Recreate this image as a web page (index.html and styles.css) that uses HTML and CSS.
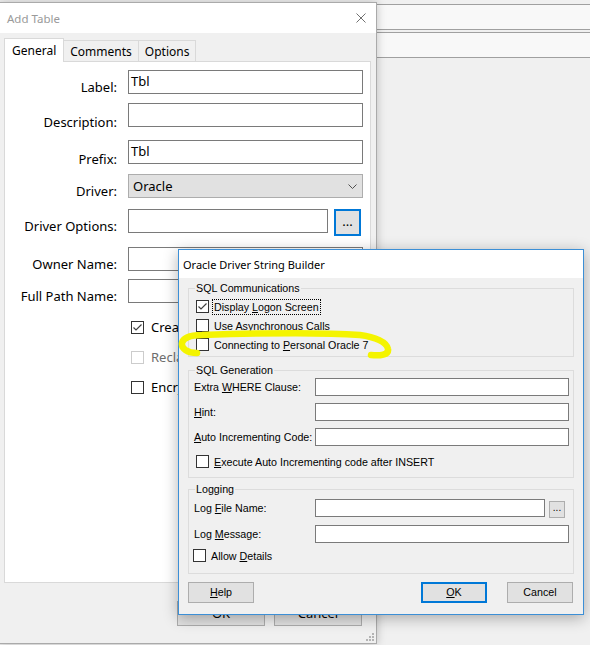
FILE: index.html
```html
<!DOCTYPE html>
<html lang="en">
<head>
<meta charset="utf-8">
<title>Add Table</title>
<link rel="stylesheet" href="styles.css">
</head>
<body>
<div class="desk">
  <div class="desk-bar"></div>
  <div class="desk-bar"></div>
</div>

<section class="window add-table">
  <header class="titlebar">
    <span class="title">Add Table</span>
    <svg class="close" width="10" height="10" viewBox="0 0 10 10"><path d="M0.5 0.5L9.5 9.5M9.5 0.5L0.5 9.5"/></svg>
  </header>
  <div class="at-body">
    <nav class="tabs">
      <span class="tab active">General</span>
      <span class="tab">Comments</span>
      <span class="tab">Options</span>
    </nav>
    <div class="panel">
      <div class="form">
        <span class="lbl">Label:</span><div class="edit">Tbl</div>
        <span class="lbl low">Description:</span><div class="edit"></div>
        <span class="lbl low">Prefix:</span><div class="edit">Tbl</div>
        <span class="lbl">Driver:</span>
        <div class="combo"><span>Oracle</span><svg width="9" height="5" viewBox="0 0 9 5"><path d="M0.5 0.5L4.5 4.5L8.5 0.5"/></svg></div>
        <span class="lbl">Driver Options:</span>
        <div class="field-row"><div class="edit"></div><span class="btn-ellipsis">...</span></div>
        <span class="lbl">Owner Name:</span><div class="edit"></div>
        <span class="lbl">Full Path Name:</span><div class="edit"></div>
      </div>
      <div class="checks">
        <div class="chk"><span class="box"><svg width="11" height="11" viewBox="0 0 11 11"><path d="M1.5 5.5L4 8L9.5 2.5"/></svg></span><span>Create</span></div>
        <div class="chk disabled"><span class="box"></span><span>Reclaim</span></div>
        <div class="chk"><span class="box"></span><span>Encrypt</span></div>
      </div>
    </div>
    <div class="footer">
      <span class="btn">OK</span>
      <span class="btn">Cancel</span>
    </div>
  </div>
  <svg class="grip" width="10" height="10" viewBox="0 0 10 10">
    <rect x="7" y="1" width="2" height="2"/>
    <rect x="4" y="4" width="2" height="2"/><rect x="7" y="4" width="2" height="2"/>
    <rect x="1" y="7" width="2" height="2"/><rect x="4" y="7" width="2" height="2"/><rect x="7" y="7" width="2" height="2"/>
  </svg>
</section>

<section class="window oracle">
  <header class="titlebar">
    <span class="title">Oracle Driver String Builder</span>
  </header>
  <div class="ob-body">
    <fieldset class="group comms">
      <legend>SQL Communications</legend>
      <div class="ck"><span class="box"><svg width="11" height="11" viewBox="0 0 11 11"><path d="M1.5 5.5L4 8L9.5 2.5"/></svg></span><span class="ck-text focus">Display <u>L</u>ogon Screen</span></div>
      <div class="ck"><span class="box"></span><span class="ck-text">Use <u>A</u>synchronous Calls</span></div>
      <div class="ck"><span class="box"></span><span class="ck-text">Connecting to <u>P</u>ersonal Oracle 7</span></div>
    </fieldset>
    <fieldset class="group gen">
      <legend>SQL Generation</legend>
      <div class="rows">
        <span>Extra <u>W</u>HERE Clause:</span><div class="edit"></div>
        <span><u>H</u>int:</span><div class="edit"></div>
        <span><u>A</u>uto Incrementing Code:</span><div class="edit"></div>
      </div>
      <div class="ck"><span class="box"></span><span class="ck-text"><u>E</u>xecute Auto Incrementing code after INSERT</span></div>
    </fieldset>
    <fieldset class="group logging">
      <legend>Logging</legend>
      <div class="rows">
        <span>Log <u>F</u>ile Name:</span>
        <div class="pick"><div class="edit"></div><span class="mini-btn">...</span></div>
        <span>Log <u>M</u>essage:</span><div class="edit"></div>
      </div>
      <div class="ck"><span class="box"></span><span class="ck-text">Allow <u>D</u>etails</span></div>
    </fieldset>
    <div class="ob-buttons">
      <span class="pbtn"><u>H</u>elp</span>
      <span class="pbtn default"><u>O</u>K</span>
      <span class="pbtn">Cancel</span>
    </div>
  </div>
</section>

<svg class="marker" width="230" height="45" viewBox="0 0 230 45">
  <path d="M27,31 C18,31 11,27 12,21 C13,16 20,13 32,13 C90,11 150,10 190,13 C205,15 217,20 218,27 C219,33 210,34 201,33"/>
</svg>
</body>
</html>
```

FILE: styles.css
```css
* { box-sizing: border-box; }

html, body { margin: 0; }

body {
  position: relative;
  width: 590px;
  height: 645px;
  overflow: hidden;
  background: #f0f0f0;
  font-family: "Noto Sans", sans-serif;
  color: #000;
}

/* toolbars of the main window behind the dialogs */
.desk { padding-top: 4px; }
.desk-bar {
  height: 26px;
  background: #f8f8f8;
  border-top: 1px solid #a0a0a0;
  border-bottom: 1px solid #a0a0a0;
}
.desk-bar + .desk-bar { margin-top: 2px; }

/* generic window frame */
.window {
  position: absolute;
  display: flex;
  flex-direction: column;
  background: #f0f0f0;
}
.titlebar {
  display: flex;
  align-items: center;
  background: #fff;
  flex: none;
}

/* ---------- Add Table (inactive) ---------- */
.add-table {
  left: -1px;
  top: 2px;
  width: 378px;
  height: 642px;
  border: 1px solid #aaaaaa;
  box-shadow: 0 0 9px rgba(0, 0, 0, 0.22);
}
.add-table .titlebar {
  height: 30px;
  padding: 0 10px 0 7px;
  justify-content: space-between;
}
.add-table .title {
  font-size: 11.5px;
  color: #9a9a9a;
}
.close path { stroke: #707070; stroke-width: 1; fill: none; }

.at-body {
  flex: 1;
  display: flex;
  flex-direction: column;
  padding: 5px 5px 0 4px;
}

.tabs {
  display: flex;
  align-items: flex-end;
  height: 23px;
}
.tab {
  display: flex;
  align-items: center;
  height: 21px;
  padding: 0 6px;
  font-size: 12px;
  background: #f0f0f0;
  border: 1px solid #d9d9d9;
  border-bottom: 0;
  margin-left: -1px;
}
.tab.active {
  position: relative;
  z-index: 1;
  height: 24px;
  margin-left: 0;
  margin-bottom: -1px;
  padding: 0 7px;
  background: #fff;
}

.panel {
  height: 522px;
  background: #fff;
  border: 1px solid #d9d9d9;
  padding-top: 8px;
}

.form {
  display: grid;
  grid-template-columns: 112px 1fr;
  grid-template-rows: 33px 37px 34px 35px 38px 32px 24px;
  column-gap: 11px;
  padding-right: 7px;
}
.lbl {
  text-align: right;
  font-size: 13px;
  line-height: 16px;
  padding-top: 9px;
  white-space: nowrap;
}
.lbl.low { padding-top: 11px; }
.edit {
  height: 24px;
  background: #fff;
  border: 1px solid #7a7a7a;
  padding-left: 2px;
  font-size: 13px;
  line-height: 21px;
}
.combo {
  height: 24px;
  display: flex;
  align-items: center;
  justify-content: space-between;
  padding: 0 5px 0 4px;
  background: #e1e1e1;
  border: 1px solid #adadad;
  font-size: 13px;
}
.combo path { stroke: #505050; stroke-width: 1; fill: none; }
.field-row {
  display: flex;
  align-items: flex-start;
  gap: 6px;
  padding-right: 2px;
}
.field-row .edit { flex: 1; }
.btn-ellipsis {
  width: 27px;
  height: 27px;
  flex: none;
  background: #e1e1e1;
  border: 2px solid #0078d7;
  font-size: 13px;
  line-height: 20px;
  text-align: center;
}

.checks {
  margin-top: 18px;
  padding-left: 126px;
  display: flex;
  flex-direction: column;
  gap: 17px;
}
.chk {
  display: flex;
  align-items: center;
  gap: 7px;
  height: 13px;
  font-size: 13px;
  line-height: 13px;
}
.box {
  width: 13px;
  height: 13px;
  flex: none;
  background: #fff;
  border: 1px solid #333;
  display: flex;
  align-items: center;
  justify-content: center;
}
.box path { stroke: #404040; stroke-width: 1.2; fill: none; }
.chk.disabled { color: #6d6d6d; }
.chk.disabled .box { border-color: #cccccc; }

.footer {
  display: flex;
  justify-content: flex-end;
  gap: 9px;
  margin-top: 18px;
  padding-right: 9px;
}
.btn {
  width: 88px;
  height: 25px;
  background: #e1e1e1;
  border: 1px solid #adadad;
  font-size: 13px;
  line-height: 23px;
  text-align: center;
}

.grip {
  position: absolute;
  right: 1px;
  bottom: 1px;
}
.grip rect { fill: #b4b4b4; }

/* ---------- Oracle Driver String Builder (active) ---------- */
.oracle {
  left: 178px;
  top: 249px;
  width: 406px;
  height: 366px;
  border: 1px solid #3c8fd6;
  box-shadow: 0 3px 14px rgba(0, 0, 0, 0.3);
  font-family: "Liberation Sans", Arial, sans-serif;
  font-size: 10.7px;
}
.oracle .titlebar {
  height: 28px;
  padding-left: 4px;
}
.oracle .title {
  font-family: "Noto Sans", sans-serif;
  font-size: 11px;
}

.ob-body {
  flex: 1;
  padding: 4px 9px 0;
}

.group {
  margin: 0;
  min-inline-size: 0;
  border: 1px solid #dcdcdc;
  padding: 1px 4px 0 5px;
}
.group legend {
  padding: 0 1px;
  margin-left: 1px;
  font-size: 10.7px;
  line-height: 13px;
}
.comms { padding-top: 2px; padding-bottom: 2px; }
.gen { margin-top: 7px; padding-bottom: 9px; }
.logging { margin-top: 5px; padding-top: 3px; padding-bottom: 11px; }

.ck {
  display: flex;
  align-items: center;
  gap: 3px;
  height: 19px;
  line-height: 14px;
}
.ck .box { margin-left: 2px; }
.gen .ck { height: 13px; margin-top: 9px; }
.logging .ck { height: 13px; margin-top: 6px; }
.logging .ck .box { margin-left: -1px; }
.ck-text {
  border: 1px dotted transparent;
  padding: 0 1px;
  white-space: nowrap;
}
.ck-text.focus { border-color: #000; }

.rows {
  display: grid;
  grid-template-columns: 121px 1fr;
  grid-auto-rows: 18px;
  row-gap: 7px;
  align-items: center;
}
.logging .rows { row-gap: 8px; }
.rows span { white-space: nowrap; }
.rows .edit {
  height: 18px;
  border-color: #7a7a7a;
}
.pick {
  display: flex;
  align-items: flex-start;
  gap: 4px;
  padding-right: 4px;
  height: 18px;
}
.pick .edit { flex: 1; }
.mini-btn {
  width: 16px;
  height: 17px;
  margin-top: 2px;
  background: #e1e1e1;
  border: 1px solid #adadad;
  font-size: 10px;
  line-height: 12px;
  text-align: center;
}

.ob-buttons {
  display: flex;
  margin-top: 8px;
  padding-right: 1px;
}
.pbtn {
  width: 66px;
  height: 21px;
  background: #e1e1e1;
  border: 1px solid #adadad;
  text-align: center;
  line-height: 19px;
}
.pbtn.default {
  margin-left: auto;
  margin-right: 20px;
  border: 2px solid #0078d7;
  line-height: 17px;
}

/* yellow highlighter stroke drawn over the dialog */
.marker {
  position: absolute;
  left: 170px;
  top: 322px;
  pointer-events: none;
}
.marker path {
  fill: none;
  stroke: #f4f400;
  stroke-width: 6.5;
  stroke-linecap: round;
  stroke-linejoin: round;
}
```
